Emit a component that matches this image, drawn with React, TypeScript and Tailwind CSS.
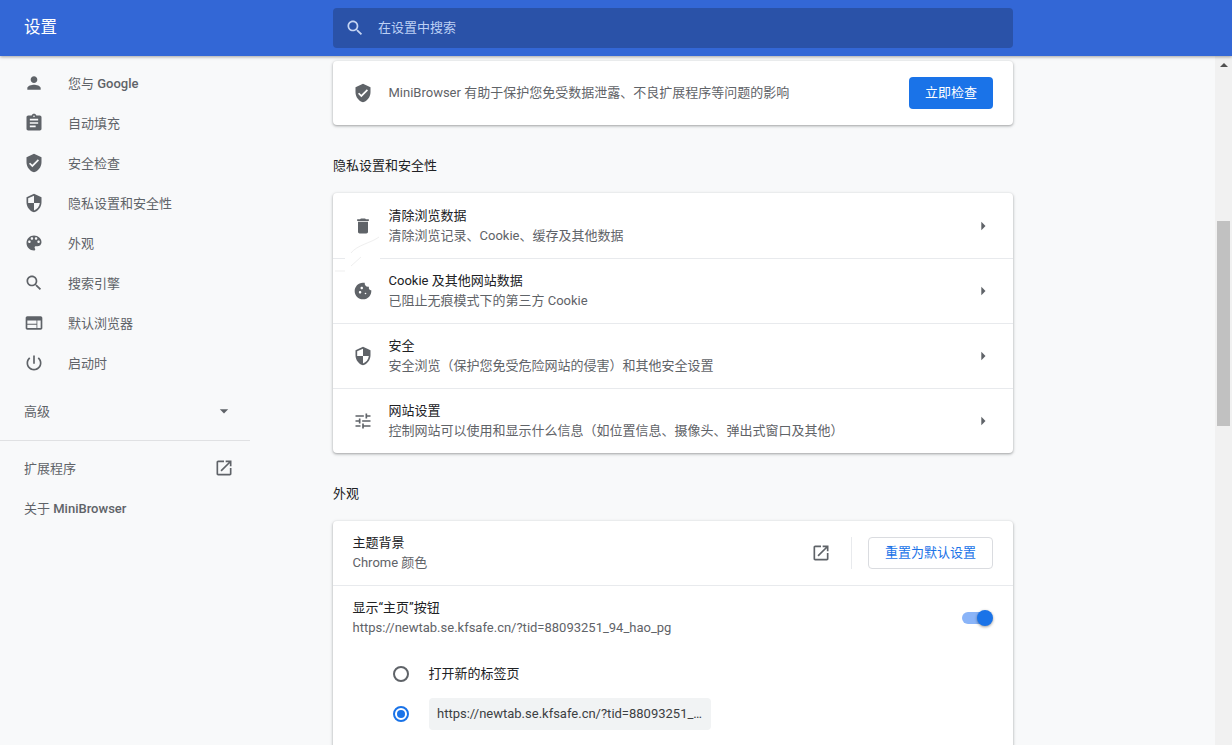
const paths = {
  person: "M12 12c2.21 0 4-1.79 4-4s-1.79-4-4-4-4 1.79-4 4 1.79 4 4 4zm0 2c-2.67 0-8 1.34-8 4v2h16v-2c0-2.66-5.33-4-8-4z",
  assignment: "M19 3h-4.18C14.4 1.84 13.3 1 12 1c-1.3 0-2.4.84-2.82 2H5c-1.1 0-2 .9-2 2v14c0 1.1.9 2 2 2h14c1.1 0 2-.9 2-2V5c0-1.1-.9-2-2-2zm-7 0c.55 0 1 .45 1 1s-.45 1-1 1-1-.45-1-1 .45-1 1-1zm2 14H7v-2h7v2zm3-4H7v-2h10v2zm0-4H7V7h10v2z",
  verified: "M12 1L3 5v6c0 5.55 3.84 10.74 9 12 5.16-1.26 9-6.45 9-12V5l-9-4zm-2 16l-4-4 1.41-1.41L10 14.17l6.59-6.59L18 9l-8 8z",
  security: "M12 1L3 5v6c0 5.55 3.84 10.74 9 12 5.16-1.26 9-6.45 9-12V5l-9-4zm0 10.99h7c-.53 4.12-3.28 7.79-7 8.94V12H5V6.3l7-3.11v8.8z",
  palette: "M12 3c-4.97 0-9 4.03-9 9s4.03 9 9 9c.83 0 1.5-.67 1.5-1.5 0-.39-.15-.74-.39-1.01-.23-.26-.38-.61-.38-.99 0-.83.67-1.5 1.5-1.5H16c2.76 0 5-2.24 5-5 0-4.42-4.03-8-9-8zm-5.5 9c-.83 0-1.5-.67-1.5-1.5S5.67 9 6.5 9 8 9.67 8 10.5 7.33 12 6.5 12zm3-4C8.67 8 8 7.33 8 6.5S8.67 5 9.5 5s1.5.67 1.5 1.5S10.33 8 9.5 8zm5 0c-.83 0-1.5-.67-1.5-1.5S13.67 5 14.5 5s1.5.67 1.5 1.5S15.33 8 14.5 8zm3 4c-.83 0-1.5-.67-1.5-1.5S16.67 9 17.5 9s1.5.67 1.5 1.5-.67 1.5-1.5 1.5z",
  search: "M15.5 14h-.79l-.28-.27C15.41 12.59 16 11.11 16 9.5 16 5.91 13.09 3 9.5 3S3 5.91 3 9.5 5.91 16 9.5 16c1.61 0 3.09-.59 4.23-1.57l.27.28v.79l5 4.99L20.49 19l-4.99-5zm-6 0C7.01 14 5 11.99 5 9.5S7.01 5 9.5 5 14 7.01 14 9.5 11.99 14 9.5 14z",
  web: "M20 4H4c-1.1 0-2 .9-2 2v12c0 1.1.9 2 2 2h16c1.1 0 2-.9 2-2V6c0-1.1-.9-2-2-2zM4 18v-4h11v4H4zm11-5H4V9h11v4zm5 5h-4V9h4v9z",
  power: "M13 3h-2v10h2V3zm4.83 2.17l-1.42 1.42C17.99 7.86 19 9.81 19 12c0 3.87-3.13 7-7 7s-7-3.13-7-7c0-2.19 1.01-4.14 2.58-5.42L6.17 5.17C4.23 6.82 3 9.26 3 12c0 4.97 4.03 9 9 9s9-4.03 9-9c0-2.74-1.23-5.18-3.17-6.83z",
  open: "M19 19H5V5h7V3H5c-1.11 0-2 .9-2 2v14c0 1.1.89 2 2 2h14c1.1 0 2-.9 2-2v-7h-2v7zM14 3v2h3.59l-9.83 9.83 1.41 1.41L19 6.41V10h2V3h-7z",
  trash: "M6 19c0 1.1.9 2 2 2h8c1.1 0 2-.9 2-2V7H6v12zM19 4h-3.5l-1-1h-5l-1 1H5v2h14V4z",
  cookie: "M21.95 10.99c-1.79-.03-3.7-1.95-2.68-4.22-2.97 1-5.78-1.59-5.19-4.56C7.11.74 2 6.41 2 12c0 5.52 4.48 10 10 10 5.89 0 10.54-5.08 9.95-11.01zM8.5 15c-.83 0-1.5-.67-1.5-1.5S7.67 12 8.5 12s1.5.67 1.5 1.5S9.33 15 8.5 15zm2-5C9.67 10 9 9.33 9 8.5S9.67 7 10.5 7s1.5.67 1.5 1.5-.67 1.5-1.5 1.5zm4.5 6c-.55 0-1-.45-1-1s.45-1 1-1 1 .45 1 1-.45 1-1 1z",
  tune: "M3 17v2h6v-2H3zM3 5v2h10V5H3zm10 16v-2h8v-2h-8v-2h-2v6h2zM7 9v2H3v2h4v2h2V9H7zm14 4v-2H11v2h10zm-6-4h2V7h4V5h-4V3h-2v6z",
  arrowRight: "M10 17l5-5-5-5v10z",
  arrowDown: "M7 10l5 5 5-5z",
}

function Icon({ d, className }: { d: string; className: string }) {
  return (
    <svg viewBox="0 0 24 24" fill="currentColor" className={className}>
      <path d={d} />
    </svg>
  )
}

const navItems = [
  { label: "您与", latin: "Google", icon: paths.person },
  { label: "自动填充", icon: paths.assignment },
  { label: "安全检查", icon: paths.verified },
  { label: "隐私设置和安全性", icon: paths.security },
  { label: "外观", icon: paths.palette },
  { label: "搜索引擎", icon: paths.search },
  { label: "默认浏览器", icon: paths.web },
  { label: "启动时", icon: paths.power },
]

const privacyRows = [
  { title: "清除浏览数据", sub: "清除浏览记录、Cookie、缓存及其他数据", icon: paths.trash },
  { title: "Cookie 及其他网站数据", sub: "已阻止无痕模式下的第三方 Cookie", icon: paths.cookie },
  { title: "安全", sub: "安全浏览（保护您免受危险网站的侵害）和其他安全设置", icon: paths.security },
  { title: "网站设置", sub: "控制网站可以使用和显示什么信息（如位置信息、摄像头、弹出式窗口及其他）", icon: paths.tune },
]

function Sidebar() {
  return (
    <aside className="w-[250px] shrink-0 pt-[7px] text-[13px] leading-[20px] text-[#5f6368]">
      <ul>
        {navItems.map((item) => (
          <li key={item.label} className="flex h-10 items-center pl-6">
            <Icon d={item.icon} className="h-5 w-5" />
            <span className="ml-6 pt-[2px]">
              {item.label}
              {item.latin && <span className="font-medium"> {item.latin}</span>}
            </span>
          </li>
        ))}
      </ul>
      <div className="mt-[8px] flex h-10 items-center justify-between pl-6 pr-[16px]">
        <span className="pt-[2px]">高级</span>
        <Icon d={paths.arrowDown} className="h-5 w-5" />
      </div>
      <div className="mt-[9px] border-t border-[#e0e1e3]" />
      <div className="mt-[7px] flex h-10 items-center justify-between pl-6 pr-[16px]">
        <span className="pt-[2px]">扩展程序</span>
        <Icon d={paths.open} className="h-5 w-5" />
      </div>
      <div className="flex h-10 items-center pl-6">
        <span className="pt-[2px]">
          关于 <span className="font-medium">MiniBrowser</span>
        </span>
      </div>
    </aside>
  )
}

function SectionTitle({ children }: { children: string }) {
  return <h2 className="pb-[18px] pt-[32px] text-[13px] font-normal leading-[18px] text-[#202124]">{children}</h2>
}

const cardClass = "rounded bg-white shadow-[0_1px_2px_rgba(60,64,67,0.3),0_1px_3px_1px_rgba(60,64,67,0.15)]"

function Content() {
  return (
    <main className="ml-[83px] w-[680px] shrink-0 pt-[5px] text-[13px] leading-[20px]">
      <section className={`${cardClass} flex h-16 items-center px-5`}>
        <Icon d={paths.verified} className="h-5 w-5 text-[#5f6368]" />
        <span className="ml-[15.5px] flex-1 text-[#5f6368]">MiniBrowser 有助于保护您免受数据泄露、不良扩展程序等问题的影响</span>
        <button className="h-8 w-[84px] rounded bg-[#1a73e8] text-white">立即检查</button>
      </section>

      <SectionTitle>隐私设置和安全性</SectionTitle>
      <section className={`${cardClass} relative`}>
        {privacyRows.map((row, i) => (
          <div key={row.title} className={`flex h-[65px] items-center px-5 ${i > 0 ? "border-t border-[#e8eaed]" : ""}`}>
            <Icon d={row.icon} className="h-5 w-5 text-[#5f6368]" />
            <div className="ml-[15.5px] flex-1">
              <div className="text-[#202124]">{row.title}</div>
              <div className="text-[#5f6368]">{row.sub}</div>
            </div>
            <Icon d={paths.arrowRight} className="h-5 w-5 text-[#5f6368]" />
          </div>
        ))}
        {/* faint smudge that sits over the first divider in the capture */}
        <svg viewBox="0 0 60 45" fill="none" className="absolute left-0 top-[40px] h-[45px] w-[60px]">
          <path d="M12 25.5H47" stroke="#ffffff" strokeWidth="2" />
          <path d="M46 4C38 10 24 12 18 20M18 33L28 24M2 38H12" stroke="#efefef" />
        </svg>
      </section>

      <SectionTitle>外观</SectionTitle>
      <section className={cardClass}>
        <div className="flex h-16 items-center pl-[19.5px] pr-5">
          <div className="flex-1">
            <div className="text-[#202124]">主题背景</div>
            <div className="text-[#5f6368]">Chrome 颜色</div>
          </div>
          <Icon d={paths.open} className="h-5 w-5 text-[#5f6368]" />
          <div className="ml-5 mr-4 h-8 w-px bg-[#e8eaed]" />
          <button className="h-8 w-[125px] rounded border border-[#dadce0] bg-white text-[#1a73e8]">重置为默认设置</button>
        </div>
        <div className="border-t border-[#e8eaed] pl-[19.5px] pr-5 pt-[12px]">
          <div className="flex items-center justify-between">
            <div>
              <div className="text-[#202124]">显示“主页”按钮</div>
              <div className="text-[#5f6368]">https://newtab.se.kfsafe.cn/?tid=88093251_94_hao_pg</div>
            </div>
            <div className="relative mr-[3px] h-3 w-7 rounded-full bg-[#8ab4f8]">
              <span className="absolute right-[-3px] top-[-2px] h-4 w-4 rounded-full bg-[#1a73e8] shadow-[0_1px_3px_rgba(0,0,0,0.4)]" />
            </div>
          </div>
          <div className="mt-[16px] flex h-10 items-center pl-[40.5px]">
            <span className="h-4 w-4 rounded-full border-2 border-[#5f6368]" />
            <span className="ml-[19.5px] text-[#202124]">打开新的标签页</span>
          </div>
          <div className="flex h-10 items-center pl-[40.5px]">
            <span className="flex h-4 w-4 items-center justify-center rounded-full border-2 border-[#1a73e8]">
              <span className="h-2 w-2 rounded-full bg-[#1a73e8]" />
            </span>
            <div className="ml-5 flex h-8 w-[282px] items-center rounded bg-[#f1f3f4] px-2 text-[#3c4043]">
              <span className="truncate">https://newtab.se.kfsafe.cn/?tid=88093251_94_hao_pg</span>
            </div>
          </div>
          <div className="h-16" />
        </div>
      </section>
    </main>
  )
}

function Scrollbar() {
  return (
    <div className="flex w-[17px] shrink-0 flex-col items-center bg-[#f1f1f1]">
      <div className="mt-[7px] h-0 w-0 border-x-[4px] border-b-[4px] border-x-transparent border-b-[#505050]" />
      <div className="mt-[154px] h-[205px] w-[13px] bg-[#c1c1c1]" />
    </div>
  )
}

export default function App() {
  return (
    <div className="flex h-[745px] flex-col overflow-hidden bg-[#f8f9fa] font-['Roboto','Noto_Sans_CJK_SC',sans-serif]">
      <header className="relative z-10 flex h-14 shrink-0 items-center bg-[#3367d6] shadow-[0_1px_3px_rgba(0,0,0,0.35)]">
        <h1 className="w-[333px] pl-6 text-[16.5px] font-normal text-white">设置</h1>
        <div className="flex h-10 w-[680px] items-center rounded-sm bg-[#2a52a8] px-3 text-[13px] text-[#bcd0f5]">
          <Icon d={paths.search} className="h-5 w-5 text-[#c6d5f3]" />
          <span className="ml-[13px]">在设置中搜索</span>
        </div>
      </header>
      <div className="flex min-h-0 flex-1 overflow-hidden">
        <Sidebar />
        <Content />
        <div className="flex-1" />
        <Scrollbar />
      </div>
    </div>
  )
}
